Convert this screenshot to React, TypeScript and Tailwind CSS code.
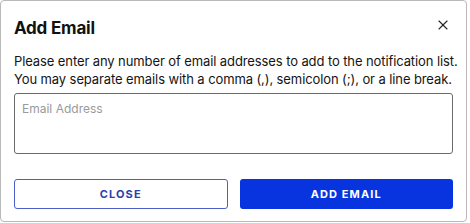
import { X } from "lucide-react";

export default function App() {
  return (
    <div className="w-[470px] h-[223px] bg-white font-['Inter',sans-serif]">
      <div className="w-[467px] h-[222px] border border-[#b9b9b9] rounded-[4px] px-[13px] pt-[15px] flex flex-col">
        <div className="flex items-start justify-between">
          <h1 className="text-[17px] leading-[24px] font-bold text-[#111] tracking-[-0.2px]">Add Email</h1>
          <button className="mt-[1px] mr-[2px] text-[#222]">
            <X size={16} strokeWidth={1.6} />
          </button>
        </div>
        <p className="mt-[12px] text-[13px] leading-[18px] text-[#141414] tracking-[-0.1px] whitespace-nowrap">
          Please enter any number of email addresses to add to the notification list.
          <br />
          You may separate emails with a comma (,), semicolon (;), or a line break.
        </p>
        <textarea
          placeholder="Email Address"
          className="mt-[5px] h-[61px] w-full resize-none border border-[#6b6b6b] rounded-[3px] px-[7px] py-[7px] text-[12px] leading-[16px] placeholder:text-[#9a9a9a] outline-none"
        />
        <div className="mt-[25px] grid grid-cols-2 gap-[12px]">
          <button className="h-[30px] border border-[#4a5fc8] rounded-[3px] text-[#2b3fae] text-[11px] font-bold tracking-[0.1em]">
            CLOSE
          </button>
          <button className="h-[30px] bg-[#0834e0] rounded-[3px] text-white text-[11px] font-bold tracking-[0.1em]">
            ADD EMAIL
          </button>
        </div>
      </div>
    </div>
  );
}
